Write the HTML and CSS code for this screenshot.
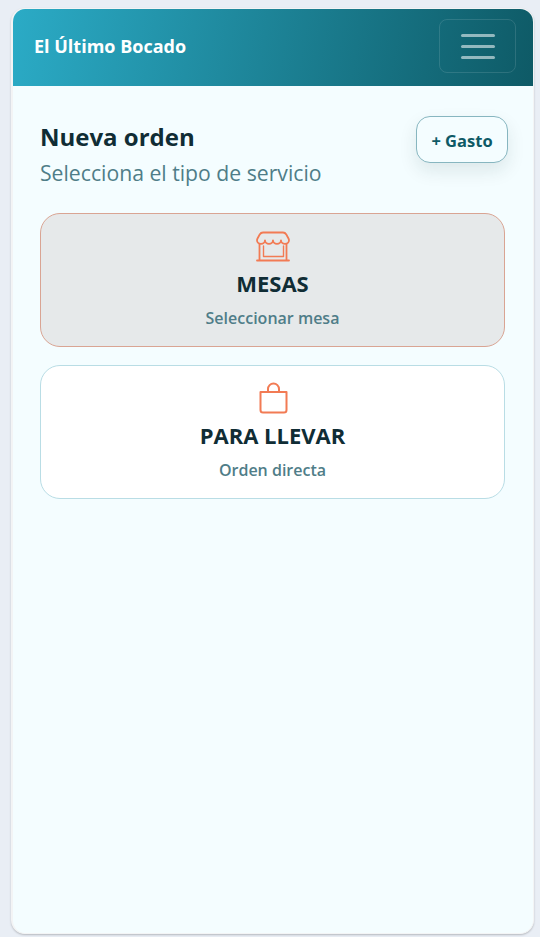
FILE: index.html
```html
<!DOCTYPE html>
<html lang="es">

<head>
  <meta charset="UTF-8">
  <meta name="viewport" content="width=device-width, initial-scale=1.0">
  <title>El Último Bocado</title>
  <link rel="stylesheet" href="styles.css">
</head>

<body>
  <div class="app">
    <header class="topbar">
      <span class="brand">El Último Bocado</span>
      <button class="menu-btn" aria-label="Menú">
        <span class="menu-line"></span>
        <span class="menu-line"></span>
        <span class="menu-line"></span>
      </button>
    </header>

    <main class="content">
      <div class="page-head">
        <div>
          <h1 class="page-title">Nueva orden</h1>
          <p class="page-sub">Selecciona el tipo de servicio</p>
        </div>
        <button class="expense-btn">+ Gasto</button>
      </div>

      <div class="service service-active">
        <svg class="service-icon" viewBox="0 -1 34 32" fill="none" stroke="#f27b54" stroke-width="1.8" stroke-linecap="round" stroke-linejoin="round">
          <path d="M7 1.500h20c1.500 0 2.600.8 3.300 2l2.200 4c.3.6.5 1.200.5 1.800a4 3.500 0 0 1-8 0a4 3.500 0 0 1-8 0a4 3.500 0 0 1-8 0a4 3.500 0 0 1-8 0c0-.6.2-1.200.5-1.800l2.200-4C4.400 2.300 5.500 1.500 7 1.500z"/>
          <path d="M3.500 13v16M30.500 13v16M1 29.500h32"/>
          <path d="M7.500 15v10.500h20V15" stroke-width="1.400"/>
        </svg>
        <h2 class="service-name">MESAS</h2>
        <p class="service-hint">Seleccionar mesa</p>
      </div>

      <div class="service">
        <svg class="service-icon" viewBox="0 0 34 32" fill="none" stroke="#f27b54" stroke-width="2" stroke-linecap="round" stroke-linejoin="round">
          <path d="M4.500 10h26v18a2.500 2.500 0 0 1-2.500 2.500H7A2.500 2.500 0 0 1 4.500 28z"/>
          <path d="M12 10V7a5.500 5.500 0 0 1 11 0v3"/>
        </svg>
        <h2 class="service-name">PARA LLEVAR</h2>
        <p class="service-hint">Orden directa</p>
      </div>
    </main>
  </div>
</body>

</html>
```

FILE: styles.css
```css
html, body {
  height: 100%;
}

body {
  margin: 0;
  padding: 8px 6px 3px 11px;
  box-sizing: border-box;
  background-color: #e9eef5;
  font-family: "Open Sans", "Noto Sans", sans-serif;
}

.app {
  height: 100%;
  box-sizing: border-box;
  display: flex;
  flex-direction: column;
  background-color: #f4fdff;
  border: 2px solid #f3f4f5;
  border-top-width: 1px;
  border-right-width: 1px;
  border-bottom-width: 1px;
  border-radius: 14px;
  overflow: hidden;
  box-shadow: 0 1px 2px rgba(0, 0, 0, 0.22);
}

.topbar {
  height: 76.5px;
  flex-shrink: 0;
  box-sizing: border-box;
  display: flex;
  align-items: center;
  justify-content: space-between;
  padding: 0 17px 2px 21px;
  background: linear-gradient(100deg, #2babc6, #0e5a66);
}

.brand {
  color: #fff;
  font-size: 18px;
  font-weight: 700;
}

.menu-btn {
  width: 77px;
  height: 54px;
  padding: 0;
  display: flex;
  flex-direction: column;
  align-items: center;
  justify-content: center;
  gap: 8px;
  background: transparent;
  border: 1px solid rgba(255, 255, 255, 0.12);
  border-radius: 8px;
}

.menu-line {
  width: 34px;
  height: 3px;
  border-radius: 2px;
  background-color: rgba(255, 255, 255, 0.55);
}

.content {
  flex: 1;
  padding: 30.5px 28px 0 27px;
}

.page-head {
  display: flex;
  justify-content: space-between;
  align-items: flex-start;
  margin-bottom: 26px;
}

.page-title {
  margin: 5px 0 0;
  color: #102d35;
  font-size: 24px;
  font-weight: 700;
  line-height: 32px;
}

.page-sub {
  margin: 5px 0 0;
  color: #4f7d88;
  font-size: 21.200px;
  line-height: 29px;
}

.expense-btn {
  width: 92px;
  height: 47px;
  margin-right: -3px;
  padding: 2px 0 0;
  background-color: #f4fdff;
  border: 1px solid #87b6c0;
  border-radius: 14px;
  color: #0e5a66;
  font-family: inherit;
  font-size: 16.500px;
  font-weight: 700;
  box-shadow: 0 8px 18px rgba(16, 45, 53, 0.1);
}

.service {
  height: 134px;
  box-sizing: border-box;
  margin-bottom: 18px;
  padding-top: 16px;
  text-align: center;
  background-color: #fff;
  border: 1px solid #b9dde5;
  border-radius: 20px;
}

.service-active {
  background-color: #e6e9ea;
  border-color: #d9a493;
}

.service-icon {
  display: block;
  width: 34px;
  height: 32px;
  margin: 0 auto;
}

.service-name {
  margin: 5px 0 0;
  color: #102d35;
  font-size: 22px;
  font-weight: 700;
  line-height: 32px;
}

.service-hint {
  margin: 7px 0 0;
  color: #4f7d88;
  font-size: 16px;
  font-weight: 600;
  line-height: 24px;
}
```
